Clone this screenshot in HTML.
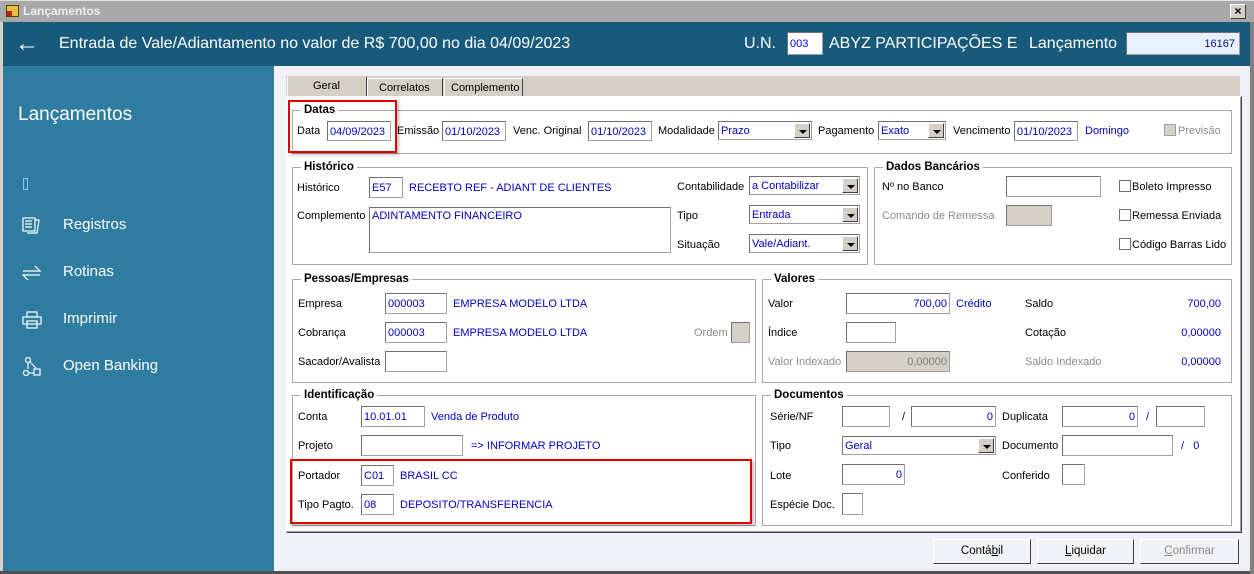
<!DOCTYPE html>
<html><head><meta charset="utf-8"><style>
*{box-sizing:border-box;margin:0;padding:0}
body{width:1254px;height:574px;overflow:hidden;background:#d4d0c8;font-family:"Liberation Sans",Tahoma,sans-serif;font-size:11px;color:#000;position:relative}
.a{position:absolute}
.l{position:absolute;white-space:nowrap;line-height:13px}
.b{color:#0000c0}
.g{color:#8a8a8a}
.i{position:absolute;background:#fff;border:1px solid #a0a0a0;border-top-color:#707070;border-left-color:#707070;color:#0000c0;padding:4px 2px 0 2px;white-space:nowrap;line-height:13px;overflow:hidden}
.r{text-align:right}
.dis{background:#d4d0c8}
.sel{padding-top:3px}
.sel .btn{position:absolute;right:1px;top:1px;width:16px;bottom:1px;background:#d4d0c8;border:1px solid;border-color:#fff #404040 #404040 #fff}
.sel .btn:after{content:"";position:absolute;left:4px;top:6px;border-left:4px solid transparent;border-right:4px solid transparent;border-top:4px solid #000}
.grp{position:absolute;border:1px solid #a8a8a8}
.grp>span{position:absolute;left:8px;top:-8px;background:#fff;padding:0 3px;font-weight:bold;font-size:11.5px;line-height:14px}
.cb{position:absolute;width:12px;height:12px;background:#fff;border:1px solid #707070}
.red{position:absolute;border:2px solid #e00000;box-shadow:2px 2px 3px rgba(0,0,0,.25)}
.bt{position:absolute;height:25px;background:#f0f2f8;border:1px solid;border-color:#fff #404040 #404040 #fff;text-align:center;line-height:22px;font-size:11.5px}
.side{color:#fff;font-size:15px;position:absolute}
</style></head><body>
<div class="a" style="left:0;top:0;width:1254px;height:22px;background:#a8a8a8;border-top:1px solid #e0e0e0"></div>
<div class="a" style="left:6px;top:5px;width:13px;height:12px;background:#e8c040;border:1px solid #604000"></div>
<div class="a" style="left:7px;top:11px;width:5px;height:5px;background:#c02020"></div>
<div class="l" style="left:23px;top:5px;color:#eeeeee;font-weight:bold;font-size:12px">Lançamentos</div>
<div class="a" style="left:1230px;top:4px;width:16px;height:15px;background:#d4d0c8;border:1px solid;border-color:#fff #404040 #404040 #fff;font-size:12px;line-height:12px;text-align:center;font-weight:bold">×</div>
<div class="a" style="left:3px;top:22px;width:1247px;height:44px;background:#175a7c"></div>
<div class="l" style="left:15px;top:32px;color:#fff;font-size:24px;line-height:24px">&#8592;</div>
<div class="l" style="left:59px;top:35px;color:#fff;font-size:16px;line-height:18px">Entrada de Vale/Adiantamento no valor de R$ 700,00 no dia 04/09/2023</div>
<div class="l" style="left:744px;top:35px;color:#fff;font-size:16px;line-height:18px">U.N.</div>
<div class="i" style="left:787px;top:32px;width:36px;height:23px;font-size:11px;padding-top:5px">003</div>
<div class="l" style="left:829px;top:35px;color:#fff;font-size:16px;line-height:18px">ABYZ PARTICIPAÇÕES E</div>
<div class="l" style="left:1029px;top:35px;color:#fff;font-size:16px;line-height:18px">Lançamento</div>
<div class="i r" style="left:1126px;top:32px;width:114px;height:23px;background:#e6f0ff;padding-top:5px;padding-right:4px;color:#101080">16167</div>
<div class="a" style="left:3px;top:66px;width:271px;height:505px;background:#2e7ca0"></div>
<div class="side" style="left:18px;top:104px;font-size:19px">Lançamentos</div>
<div class="a" style="left:23px;top:178px;width:5px;height:12px;border:1px solid #80c8ff"></div>
<svg class="a" style="left:22px;top:217px" width="20" height="18" viewBox="0 0 20 18" fill="none" stroke="#fff" stroke-width="1.2"><rect x="1" y="1" width="12" height="13"/><path d="M3 4h7M3 7h7M3 10h7M13 3h4l-2 13H5"/></svg>
<div class="side" style="left:63px;top:216px">Registros</div>
<svg class="a" style="left:22px;top:264px" width="20" height="18" viewBox="0 0 20 18" fill="none" stroke="#fff" stroke-width="1.2"><path d="M1 7h17l-5-5M18 11H1l5 5"/></svg>
<div class="side" style="left:63px;top:263px">Rotinas</div>
<svg class="a" style="left:22px;top:311px" width="20" height="18" viewBox="0 0 20 18" fill="none" stroke="#fff" stroke-width="1.2"><rect x="5" y="1" width="10" height="5"/><rect x="1" y="6" width="18" height="7"/><rect x="5" y="10" width="10" height="7"/></svg>
<div class="side" style="left:63px;top:310px">Imprimir</div>
<svg class="a" style="left:22px;top:357px" width="20" height="20" viewBox="0 0 20 20" fill="none" stroke="#fff" stroke-width="1.2"><circle cx="6" cy="3" r="2.5"/><path d="M8 5l6 6M6 6v6"/><circle cx="4" cy="16" r="2.5"/><rect x="12" y="12" width="6" height="6"/><path d="M7 16h5"/></svg>
<div class="side" style="left:63px;top:357px">Open Banking</div>
<div class="a" style="left:274px;top:66px;width:976px;height:505px;background:#f0f2f8"></div>
<div class="a" style="left:0;top:571px;width:1254px;height:3px;background:#505050"></div>
<div class="a" style="left:1250px;top:22px;width:4px;height:552px;background:#808080"></div>
<div class="a" style="left:286px;top:76px;width:954px;height:21px;background:#d4d0c8"></div>
<div class="a" style="left:287px;top:77px;width:80px;height:20px;border-right:1px solid #404040;border-left:1px solid #fff"></div>
<div class="l" style="left:313px;top:80px">Geral</div>
<div class="a" style="left:367px;top:78px;width:76px;height:19px;border:1px solid;border-color:#fff #404040 transparent #fff"></div>
<div class="l" style="left:379px;top:82px">Correlatos</div>
<div class="a" style="left:444px;top:78px;width:79px;height:19px;border:1px solid;border-color:#fff #404040 transparent #fff"></div>
<div class="l" style="left:451px;top:82px">Complemento</div>
<div class="a" style="left:286px;top:96px;width:956px;height:437px;background:#fff;border:1px solid;border-color:#fff #404040 #404040 #fff;box-shadow:inset -1px -1px 0 #a0a0a0"></div>

<div class="grp" style="left:292px;top:110px;width:940px;height:44px"><span>Datas</span></div>
<div class="l" style="left:297px;top:125px">Data</div>
<div class="i" style="left:327px;top:121px;width:64px;height:20px">04/09/2023</div>
<div class="l" style="left:397px;top:125px">Emissão</div>
<div class="i" style="left:442px;top:121px;width:64px;height:20px">01/10/2023</div>
<div class="l" style="left:513px;top:125px">Venc. Original</div>
<div class="i" style="left:588px;top:121px;width:64px;height:20px">01/10/2023</div>
<div class="l" style="left:658px;top:125px">Modalidade</div>
<div class="i sel" style="left:718px;top:121px;width:94px;height:19px">Prazo<div class="btn"></div></div>
<div class="l" style="left:818px;top:125px">Pagamento</div>
<div class="i sel" style="left:878px;top:121px;width:68px;height:19px">Exato<div class="btn"></div></div>
<div class="l" style="left:953px;top:125px">Vencimento</div>
<div class="i" style="left:1014px;top:121px;width:64px;height:20px">01/10/2023</div>
<div class="l b" style="left:1085px;top:125px">Domingo</div>
<div class="cb" style="left:1164px;top:124px;background:#d4d0c8;border-color:#a0a0a0"></div>
<div class="l g" style="left:1178px;top:125px">Previsão</div>
<div class="red" style="left:288px;top:100px;width:109px;height:53px"></div>

<div class="grp" style="left:292px;top:167px;width:576px;height:98px"><span>Histórico</span></div>
<div class="l" style="left:297px;top:182px">Histórico</div>
<div class="i" style="left:369px;top:177px;width:34px;height:21px">E57</div>
<div class="l b" style="left:409px;top:182px">RECEBTO REF - ADIANT DE CLIENTES</div>
<div class="l" style="left:297px;top:210px">Complemento</div>
<div class="i" style="left:369px;top:207px;width:302px;height:46px;padding-top:2px">ADINTAMENTO FINANCEIRO</div>
<div class="l" style="left:677px;top:181px">Contabilidade</div>
<div class="i sel" style="left:749px;top:176px;width:111px;height:19px">a Contabilizar<div class="btn"></div></div>
<div class="l" style="left:677px;top:210px">Tipo</div>
<div class="i sel" style="left:749px;top:205px;width:111px;height:19px">Entrada<div class="btn"></div></div>
<div class="l" style="left:677px;top:239px">Situação</div>
<div class="i sel" style="left:749px;top:234px;width:111px;height:19px">Vale/Adiant.<div class="btn"></div></div>

<div class="grp" style="left:874px;top:167px;width:358px;height:98px"><span>Dados Bancários</span></div>
<div class="l" style="left:882px;top:181px">Nº no Banco</div>
<div class="i" style="left:1006px;top:176px;width:95px;height:21px"></div>
<div class="l g" style="left:882px;top:210px">Comando de Remessa</div>
<div class="i dis" style="left:1006px;top:205px;width:46px;height:21px"></div>
<div class="cb" style="left:1119px;top:180px"></div><div class="l" style="left:1132px;top:181px">Boleto Impresso</div>
<div class="cb" style="left:1119px;top:209px"></div><div class="l" style="left:1132px;top:210px">Remessa Enviada</div>
<div class="cb" style="left:1119px;top:238px"></div><div class="l" style="left:1132px;top:239px">Código Barras Lido</div>

<div class="grp" style="left:292px;top:279px;width:464px;height:104px"><span>Pessoas/Empresas</span></div>
<div class="l" style="left:298px;top:298px">Empresa</div>
<div class="i" style="left:385px;top:293px;width:62px;height:21px">000003</div>
<div class="l b" style="left:453px;top:298px">EMPRESA MODELO LTDA</div>
<div class="l" style="left:298px;top:327px">Cobrança</div>
<div class="i" style="left:385px;top:322px;width:62px;height:21px">000003</div>
<div class="l b" style="left:453px;top:327px">EMPRESA MODELO LTDA</div>
<div class="l g" style="left:694px;top:327px">Ordem</div>
<div class="i dis" style="left:731px;top:322px;width:19px;height:21px"></div>
<div class="l" style="left:298px;top:356px">Sacador/Avalista</div>
<div class="i" style="left:385px;top:351px;width:62px;height:21px"></div>

<div class="grp" style="left:762px;top:279px;width:470px;height:104px"><span>Valores</span></div>
<div class="l" style="left:768px;top:298px">Valor</div>
<div class="i r" style="left:846px;top:293px;width:104px;height:21px">700,00</div>
<div class="l b" style="left:956px;top:298px">Crédito</div>
<div class="l" style="left:1025px;top:298px">Saldo</div>
<div class="l b r" style="left:1150px;width:71px;top:298px">700,00</div>
<div class="l" style="left:768px;top:327px">Índice</div>
<div class="i" style="left:846px;top:322px;width:50px;height:21px"></div>
<div class="l" style="left:1025px;top:327px">Cotação</div>
<div class="l b r" style="left:1150px;width:71px;top:327px">0,00000</div>
<div class="l g" style="left:768px;top:356px">Valor Indexado</div>
<div class="i r dis" style="left:846px;top:351px;width:104px;height:21px;color:#808080">0,00000</div>
<div class="l g" style="left:1025px;top:356px">Saldo Indexado</div>
<div class="l b r" style="left:1150px;width:71px;top:356px">0,00000</div>

<div class="grp" style="left:292px;top:395px;width:464px;height:131px"><span>Identificação</span></div>
<div class="l" style="left:298px;top:411px">Conta</div>
<div class="i" style="left:361px;top:406px;width:64px;height:21px">10.01.01</div>
<div class="l b" style="left:431px;top:411px">Venda de Produto</div>
<div class="l" style="left:298px;top:440px">Projeto</div>
<div class="i" style="left:361px;top:435px;width:102px;height:21px"></div>
<div class="l b" style="left:471px;top:440px">=&gt; INFORMAR PROJETO</div>
<div class="l" style="left:298px;top:470px">Portador</div>
<div class="i" style="left:361px;top:465px;width:33px;height:21px">C01</div>
<div class="l b" style="left:400px;top:470px">BRASIL CC</div>
<div class="l" style="left:298px;top:499px">Tipo Pagto.</div>
<div class="i" style="left:361px;top:494px;width:33px;height:21px">08</div>
<div class="l b" style="left:400px;top:499px">DEPOSITO/TRANSFERENCIA</div>
<div class="red" style="left:290px;top:459px;width:462px;height:65px"></div>

<div class="grp" style="left:762px;top:395px;width:470px;height:131px"><span>Documentos</span></div>
<div class="l" style="left:770px;top:411px">Série/NF</div>
<div class="i" style="left:842px;top:406px;width:48px;height:21px"></div>
<div class="l" style="left:902px;top:411px">/</div>
<div class="i r" style="left:911px;top:406px;width:85px;height:21px">0</div>
<div class="l" style="left:1002px;top:411px">Duplicata</div>
<div class="i r" style="left:1062px;top:406px;width:76px;height:21px">0</div>
<div class="l b" style="left:1146px;top:411px">/</div>
<div class="i" style="left:1156px;top:406px;width:49px;height:21px"></div>
<div class="l" style="left:770px;top:440px">Tipo</div>
<div class="i sel" style="left:842px;top:436px;width:154px;height:19px">Geral<div class="btn"></div></div>
<div class="l" style="left:1002px;top:440px">Documento</div>
<div class="i" style="left:1062px;top:435px;width:111px;height:21px"></div>
<div class="l b" style="left:1181px;top:440px">/&nbsp;&nbsp;&nbsp;0</div>
<div class="l" style="left:770px;top:470px">Lote</div>
<div class="i r" style="left:842px;top:464px;width:63px;height:21px">0</div>
<div class="l" style="left:1002px;top:470px">Conferido</div>
<div class="i" style="left:1062px;top:464px;width:23px;height:21px"></div>
<div class="l" style="left:770px;top:499px">Espécie Doc.</div>
<div class="i" style="left:842px;top:493px;width:21px;height:22px"></div>

<div class="bt" style="left:933px;top:539px;width:98px">Contá<u>b</u>il</div>
<div class="bt" style="left:1037px;top:539px;width:97px"><u>L</u>iquidar</div>
<div class="bt" style="left:1140px;top:539px;width:99px;color:#8a8a8a"><u>C</u>onfirmar</div>
</body></html>
